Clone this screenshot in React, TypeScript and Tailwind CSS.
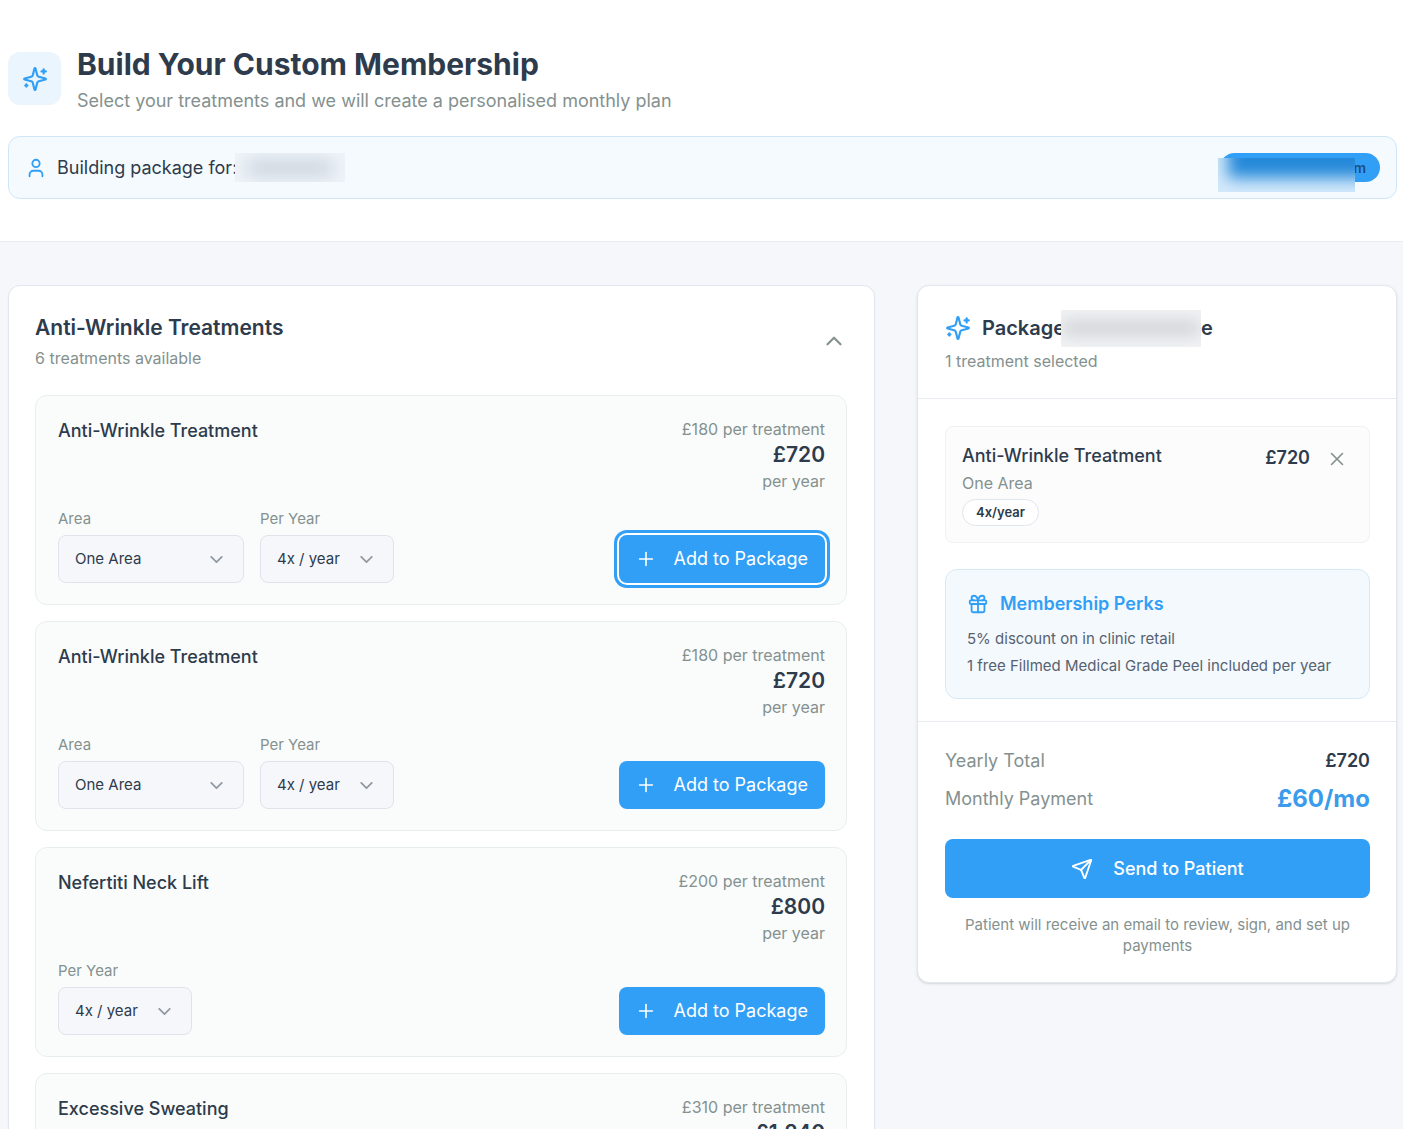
import { ChevronDown, ChevronUp, Gift, Plus, Send, User, X } from "lucide-react";

type Treatment = {
  id: string;
  name: string;
  unitPrice: string;
  yearPrice: string;
  areas?: string[];
  focused?: boolean;
};

const TREATMENTS: Treatment[] = [
  {
    id: "anti-wrinkle-1",
    name: "Anti-Wrinkle Treatment",
    unitPrice: "£180",
    yearPrice: "£720",
    areas: ["One Area"],
    focused: true,
  },
  {
    id: "anti-wrinkle-2",
    name: "Anti-Wrinkle Treatment",
    unitPrice: "£180",
    yearPrice: "£720",
    areas: ["One Area"],
  },
  { id: "neck-lift", name: "Nefertiti Neck Lift", unitPrice: "£200", yearPrice: "£800" },
  { id: "sweating", name: "Excessive Sweating", unitPrice: "£310", yearPrice: "£1,240" },
];

const PERKS = [
  "5% discount on in clinic retail",
  "1 free Fillmed Medical Grade Peel included per year",
];

function Sparkles({ className }: { className?: string }) {
  return (
    <svg
      viewBox="0 0 24 24"
      fill="none"
      stroke="currentColor"
      strokeWidth="2"
      strokeLinecap="round"
      strokeLinejoin="round"
      className={className}
      aria-hidden="true"
    >
      <path d="M9.937 15.5A2 2 0 0 0 8.5 14.063l-6.135-1.582a.5.5 0 0 1 0-.962L8.5 9.936A2 2 0 0 0 9.937 8.5l1.582-6.135a.5.5 0 0 1 .963 0L14.063 8.5A2 2 0 0 0 15.5 9.937l6.135 1.581a.5.5 0 0 1 0 .964L15.5 14.063a2 2 0 0 0-1.437 1.437l-1.582 6.135a.5.5 0 0 1-.963 0z" />
      <path d="M20 3v4" />
      <path d="M22 5h-4" />
      <path d="M4 17v2" />
      <path d="M5 18H3" />
    </svg>
  );
}

function SelectField({
  id,
  label,
  options,
  className,
}: {
  id: string;
  label: string;
  options: string[];
  className: string;
}) {
  return (
    <div>
      <label htmlFor={id} className="mb-1.5 block text-[15px] leading-5 text-[#84918f]">
        {label}
      </label>
      <div className="relative">
        <select
          id={id}
          className={`h-12 appearance-none rounded-lg border border-[#dfe3ec] bg-[#f5f7fb] pl-4 text-[15px] text-[#2d3b4c] ${className}`}
        >
          {options.map((o) => (
            <option key={o}>{o}</option>
          ))}
        </select>
        <ChevronDown className="pointer-events-none absolute right-[17px] top-3.5 size-[21px] text-[#2d3b4c] opacity-50" />
      </div>
    </div>
  );
}

function TreatmentCard({ treatment }: { treatment: Treatment }) {
  const { id, name, unitPrice, yearPrice, areas, focused } = treatment;
  return (
    <li className="rounded-xl border border-[#e8eeee] bg-[#fafcfb] py-[21px] pl-[22px] pr-[21px]">
      <div className="flex justify-between">
        <h3 className="text-lg font-medium leading-7 text-[#2d3b4c]">{name}</h3>
        <div className="text-right text-base leading-6 text-[#84918f]">
          <p>{unitPrice} per treatment</p>
          <p className="text-[21px] font-semibold leading-7 text-[#2d3b4c]">{yearPrice}</p>
          <p>per year</p>
        </div>
      </div>
      <div className="mt-4 flex items-end gap-4">
        {areas && (
          <SelectField id={`${id}-area`} label="Area" options={areas} className="w-[186px]" />
        )}
        <SelectField
          id={`${id}-freq`}
          label="Per Year"
          options={["4x / year"]}
          className="w-[134px]"
        />
        <button
          type="button"
          className={`ml-auto flex h-12 items-center gap-[17px] rounded-lg bg-[#319ff6] pl-4 pr-[17px] text-lg text-white ${
            focused ? "ring-3 ring-[#319ff6] ring-offset-2" : ""
          }`}
        >
          <Plus className="size-[22px]" strokeWidth={1.75} />
          Add to Package
        </button>
      </div>
    </li>
  );
}

function Summary() {
  return (
    <aside className="rounded-xl border border-[#e2e6ee] bg-white shadow-sm">
      <div className="border-b border-[#e8ecf0] pb-[26px] pl-[27px] pr-[26px] pt-[27px]">
        <h2 className="flex h-[30px] items-center text-xl font-semibold text-[#2d3b4c]">
          <Sparkles className="mr-[11px] size-[26px] text-[#319ff6]" />
          Package
          <span className="-ml-1 flex h-[37px] w-[140px] items-center overflow-hidden bg-[#f3f4f5]">
            <span className="h-3.5 w-full bg-[#c9ccd1] blur-[9px]" />
          </span>
          e
        </h2>
        <p className="mt-[7px] text-base leading-[22px] text-[#84918f]">1 treatment selected</p>
      </div>

      <div className="border-b border-[#e8ecf0] pb-[22px] pl-[27px] pr-[26px] pt-[27px]">
        <div className="flex items-start rounded-lg border border-[#f0f1f2] bg-[#fcfcfc] p-4 pt-[17px]">
          <div className="flex-1">
            <h3 className="text-lg font-medium leading-6 text-[#2d3b4c]">Anti-Wrinkle Treatment</h3>
            <p className="mt-1 text-base leading-[22px] text-[#84918f]">One Area</p>
            <span className="mt-[5px] flex h-[27px] w-fit items-center rounded-full border border-[#dfe5ec] bg-white px-[13px] text-[13px] font-semibold text-[#2d3b4c]">
              4x/year
            </span>
          </div>
          <span className="text-lg font-semibold leading-7 text-[#2d3b4c]">£720</span>
          <button type="button" aria-label="Remove treatment" className="ml-4 mr-[5px] mt-1">
            <X className="size-[22px] text-[#84918f]" strokeWidth={1.75} />
          </button>
        </div>

        <div className="mt-[26px] rounded-xl border border-[#d6eaf6] bg-[#f4f9fe] px-[21px] pb-[21px] pt-[21px]">
          <h3 className="flex items-center gap-[11px] text-lg font-semibold leading-[26px] text-[#319ff6]">
            <Gift className="size-[22px]" />
            Membership Perks
          </h3>
          <ul className="mt-[11px] space-y-[5px] text-[15px] leading-[22px] text-[#566270]">
            {PERKS.map((perk) => (
              <li key={perk}>{perk}</li>
            ))}
          </ul>
        </div>
      </div>

      <div className="py-[26px] pl-[27px] pr-[26px]">
        <div className="flex items-center justify-between text-lg leading-[26px]">
          <span className="text-[#84918f]">Yearly Total</span>
          <span className="font-semibold text-[#2d3b4c]">£720</span>
        </div>
        <div className="mt-[11px] flex items-center justify-between text-lg leading-7">
          <span className="text-[#84918f]">Monthly Payment</span>
          <span className="text-2xl font-bold leading-7 text-[#3b9cec]">£60/mo</span>
        </div>
        <button
          type="button"
          className="mt-[26px] flex h-[59px] w-full items-center justify-center gap-5 rounded-lg bg-[#319ff6] text-lg font-medium text-white"
        >
          <Send className="size-[22px]" />
          Send to Patient
        </button>
        <p className="mt-4 text-center text-[15px] leading-[21px] text-[#84918f]">
          Patient will receive an email to review, sign, and set up payments
        </p>
      </div>
    </aside>
  );
}

export default function App() {
  return (
    <div className="min-h-screen bg-[#f5f7fb] font-['Inter',sans-serif]">
      <header className="border-b border-[#e8ebf2] bg-white pb-[42px] pl-2 pr-1.5 pt-11">
        <div className="flex items-start gap-4">
          <div className="mt-2 grid size-[53px] place-items-center rounded-xl bg-[#eaf5fe] text-[#319ff6]">
            <Sparkles className="size-[26px]" />
          </div>
          <div>
            <h1 className="text-3xl font-bold leading-10 text-[#2d3b4c]">
              Build Your Custom Membership
            </h1>
            <p className="mt-[3px] text-lg leading-7 text-[#84918f]">
              Select your treatments and we will create a personalised monthly plan
            </p>
          </div>
        </div>

        <div className="mt-[21px] flex h-[63px] items-center rounded-xl border border-[#cfe6f7] bg-[#f5fafe] px-4">
          <User className="mr-[10px] size-[22px] text-[#319ff6]" />
          <span className="text-lg text-[#2d3b4c]">Building package for:</span>
          <span className="-ml-0.5 flex h-[29px] w-[110px] items-center overflow-hidden bg-[#eff4f9] px-3">
            <span className="h-3.5 w-full bg-[#c5ced9] blur-[9px]" />
          </span>
          <div className="relative ml-auto flex h-[29px] w-40 items-center justify-end rounded-full bg-[#319ff6] pr-[14px] text-sm font-semibold text-[#1d4e80]">
            m
            <span className="absolute -left-0.5 top-[5px] h-[34px] w-[137px] overflow-hidden bg-[#d3e9fb]">
              <span className="absolute -right-4 -top-4 left-2.5 h-9 bg-[#2388d9] blur-[8px]" />
            </span>
          </div>
        </div>
      </header>

      <main className="grid grid-cols-[minmax(0,1fr)_480px] items-start gap-[42px] pb-11 pl-2 pr-1.5 pt-[43px]">
        <section className="rounded-xl border border-[#e2e6ee] bg-white py-[27px] pl-[26px] pr-[27px] shadow-xs">
          <div className="flex items-center justify-between">
            <div>
              <h2 className="text-[21px] font-semibold leading-[30px] text-[#2d3b4c]">
                Anti-Wrinkle Treatments
              </h2>
              <p className="mt-1 text-base leading-[22px] text-[#84918f]">
                6 treatments available
              </p>
            </div>
            <button type="button" aria-label="Collapse treatments">
              <ChevronUp className="size-[26px] text-[#84918f]" />
            </button>
          </div>
          <ul className="mt-[26px] space-y-4">
            {TREATMENTS.map((t) => (
              <TreatmentCard key={t.id} treatment={t} />
            ))}
          </ul>
        </section>
        <Summary />
      </main>
    </div>
  );
}
